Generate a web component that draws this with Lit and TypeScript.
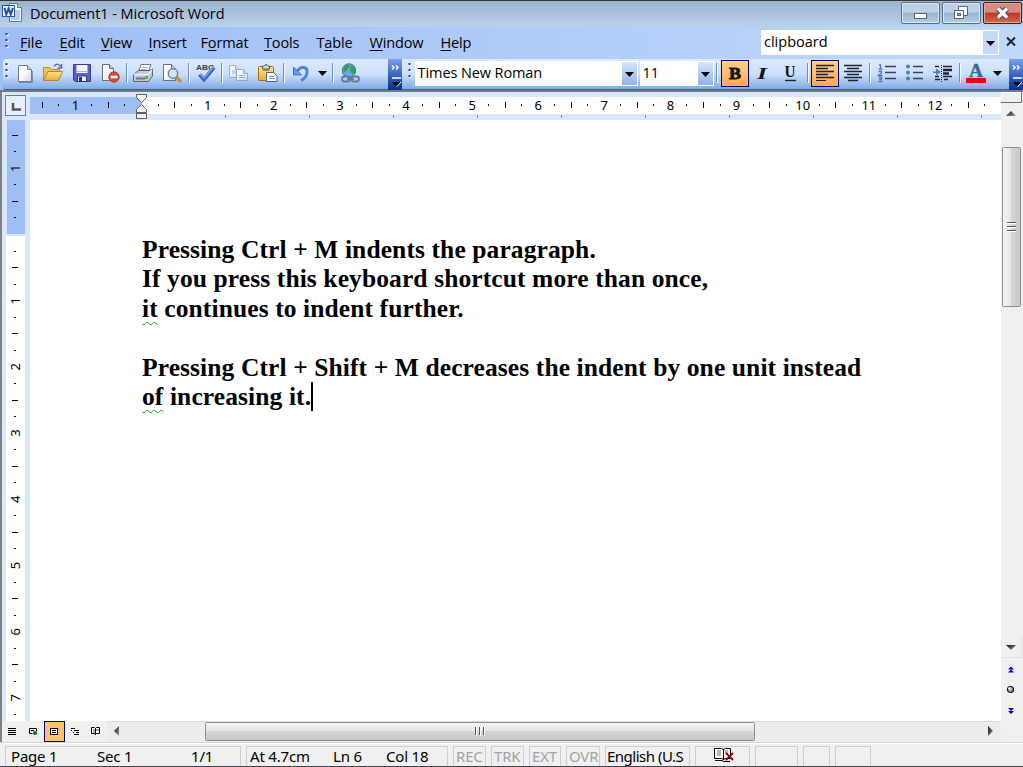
import { LitElement, html, svg, css } from "lit";
import { customElement } from "lit/decorators.js";
import { classMap } from "lit/directives/class-map.js";

const sheet = (x: number, y: number, w: number, h: number, line = "#5f6f86") => svg`
  <path d="M${x} ${y}h${w - 4}l4 4v${h - 4}h${-w}z" fill="url(#paper)" stroke=${line} />
  <path d="M${x + w - 4} ${y}v4h4" fill="#c7d3e6" stroke=${line} />`;

const ICONS: Record<string, unknown> = {
  new: svg`${sheet(-6.5, -7.5, 13, 16, "#6d7d96")}<path d="M-6 9.500H7.500V-2" fill="none" stroke="#53627b" opacity=".6"/>`,
  open: svg`<path d="M-9.500 7V-5.500h6l2 2h8V0" fill="#f1c452" stroke="#c08d2a"/>
    <path d="M-9.500 7.500L-5 -1.500H9.500L5.500 7.500z" fill="url(#gold)" stroke="#b5852a"/>
    <path d="M1 -6.500C3 -10 7 -9 8 -5.500M8.500 -9V-5H4.500" fill="none" stroke="#5873a3" stroke-width="1.500"/>`,
  save: svg`<path d="M-8.500 -8.500H8.500V8.500H-7L-8.500 7z" fill="#5a61c9" stroke="#3b3f94"/>
    <rect x="-5.500" y="-8" width="11" height="8" fill="#f4f6ff"/><path d="M-5 -1.500h10" stroke="#aab4e5"/>
    <rect x="-4.500" y="3" width="9" height="5.500" fill="#ececf6" stroke="#343884"/><rect x="-3" y="4" width="3" height="4" fill="#31357b"/>`,
  perm: svg`${sheet(-7.500, -8.500, 11, 16)}<circle cx="4" cy="4" r="5.200" fill="#dc4a2b" stroke="#b8402b"/>
    <rect x="0.500" y="2.700" width="7" height="2.600" fill="#fff"/>`,
  print: svg`<path d="M-4.500 -1L-2 -8.500H8L5 -1z" fill="#fff" stroke="#6b7890"/>
    <path d="M-1.500 -5.500h6M-2.500 -3.500h6" stroke="#a4b0c6"/>
    <path d="M-9.500 2L-5 -2.500H7L9.500 -4V3L5.500 8.500H-9.500z" fill="#c2c8d4" stroke="#5d6678"/>
    <path d="M-9 1.500H5L9 -3" fill="none" stroke="#eef1f6" stroke-width="1.500"/>
    <path d="M-7 5.500h9" stroke="#6d778a" stroke-width="2"/><rect x="2" y="3" width="3" height="3" fill="#25d820"/>`,
  preview: svg`${sheet(-8.500, -8.500, 12, 16)}<path d="M4 4L8 8" stroke="#d28c2c" stroke-width="3.200" stroke-linecap="round"/>
    <circle cx="1" cy="0.500" r="4.700" fill="#cfe6fb" stroke="#7486a3" stroke-width="1.500"/>`,
  spell: svg`<text x="-10" y="-3.500" textLength="18" lengthAdjust="spacingAndGlyphs" class="abc">ABC</text>
    <path d="M-6.500 1.500L-2 6.500L8 -5.500" fill="none" stroke="#3b66bd" stroke-width="3.800"/>
    <path d="M-6 1L-2 5L7.500 -6" fill="none" stroke="#7fa4e6" stroke-width="1.300"/>`,
  copy: svg`<g opacity=".75">${sheet(-9.500, -7.500, 10, 12, "#8b9cc0")}${sheet(-2.500, -3.500, 11, 11, "#8b9cc0")}
    <path d="M-7 -2h4M-7 0h4M0 2.500h6M0 4.500h6" stroke="#90a3ca"/></g>`,
  paste: svg`<rect x="-9.500" y="-6.500" width="15" height="14" rx="1" fill="url(#gold)" stroke="#9a6d18"/>
    <path d="M-5.500 -4V-7h2l1.500-2 1.500 2h2v3z" fill="#d8dce4" stroke="#5c5c5c"/>
    <rect x="-5" y="-3.500" width="6" height="1" fill="#76551a"/>
    <path d="M-1.500 -.500h7l3.500 3.500v5.500h-10.500z" fill="#f7faff" stroke="#4d638b"/><path d="M1 3.500h5M1 5.500h6" stroke="#7d92b8"/>`,
  undo: svg`<path d="M-4 -1.500C0 -8 7 -6 6 0C5.500 3 3 6 0 7.500" fill="none" stroke="#5383d8" stroke-width="3"/>
    <path d="M-7.500 -6V2H0.500z" fill="#6a98e6" stroke="#4374c9"/>`,
  arrow: svg`<path d="M-4 -2h9L.500 3z" fill="#000"/>`,
  link: svg`<circle cx="-1" cy="-2.500" r="6.700" fill="#6aa4ea" stroke="#4b6b9c"/>
    <path d="M-6 -6C-3 -9-1 -8 0 -7L-2 -4-5 -1-7 -2zM1 -8L5 -5 5 0 2 1 0 -3z" fill="#35a345"/>
    <g fill="none" stroke="#687892" stroke-width="1.800"><rect x="-8" y="3.500" width="8" height="5" rx="2.500"/><rect x="1" y="3.500" width="8" height="5" rx="2.500"/><path d="M-3 6h7"/></g>`,
  bold: svg`<text x="-6" y="5.500" textLength="12" lengthAdjust="spacingAndGlyphs" class="fmt b">B</text>`,
  italic: svg`<text x="-5" y="5.500" textLength="10" lengthAdjust="spacingAndGlyphs" class="fmt i">I</text>`,
  under: svg`<text x="-5.500" y="4" textLength="11" lengthAdjust="spacingAndGlyphs" class="fmt u">U</text><path d="M-5 7.500h11" stroke="#1d2430" stroke-width="1.400"/>`,
  left: svg`<path d="M-9 -7.500H9M-9 -4.500H3M-9 -1.500H9M-9 1.500H3M-9 4.500H9" stroke="#1d2430" stroke-width="1.500"/><path d="M-9 7.500H1" stroke="#1d2430"/>`,
  center: svg`<path d="M-9 -7.500H9M-6 -4.500H6M-9 -1.500H9M-6 1.500H6M-9 4.500H9M-5 7.500H5" stroke="#1d2430" stroke-width="1.500"/>`,
  number: svg`<path d="M-2 -6.500H9M-2 -.500H9M-2 5.500H9" stroke="#39435a" stroke-width="1.500"/>
    <path d="M-8 -8h1.500v4M-8.500 -3.800h4M-8.500 -1.500h3v1.500l-3 2.300h4M-8.500 4h3v4.500h-3M-8 6h2.500" fill="none" stroke="#5778b4" stroke-width="1.300"/>`,
  bullet: svg`<path d="M-2 -6.500H8M-2 -.500H8M-2 5.500H8" stroke="#39435a" stroke-width="1.500"/>
    <g fill="#5676b8"><circle cx="-7" cy="-6.500" r="2"/><circle cx="-7" cy="-.500" r="2"/><circle cx="-7" cy="5.500" r="2"/></g>`,
  indent: svg`<path d="M-8 -6.500H-4M0 -6.500H9M-8 3.500H-4M0 3.500H9M-8 6.500H-3M1 6.500H5" stroke="#1d2430" stroke-width="1.600"/><path d="M0 -3H9M0 .500H6" stroke="#1d2430" stroke-width="2.400"/>
    <path d="M-1.500 -8V9" stroke="#1d2430" stroke-dasharray="1 1"/><path d="M-10 -1.500h3v-3l5 3.500-5 3.500v-2.500h-3z" fill="#4d7cd0"/>`,
  color: svg`<text x="-7" y="4" textLength="14" lengthAdjust="spacingAndGlyphs" class="fmt a">A</text><rect x="-10" y="5" width="20" height="5" fill="#f00"/>`,
  sep: svg`<path d="M-.500 -10V9" stroke="#6a8ccb"/><path d="M.500 -9V10" stroke="#f4f9ff"/>`,
  grip: svg`<path d="M.500 -9v18" stroke="#fff" stroke-width="2" stroke-dasharray="2 4"/><path d="M-.500 -10v18" stroke="#27418a" stroke-width="2" stroke-dasharray="2 4"/>`,
};

type Cell = [icon: string, width: number, on?: boolean];
const STANDARD: Cell[] = [["grip", 8], ["new", 28], ["open", 29], ["save", 28], ["perm", 29], ["sep", 4], ["print", 29], ["preview", 28],
  ["sep", 7], ["spell", 27], ["sep", 5], ["copy", 29], ["paste", 28], ["sep", 5], ["undo", 28], ["arrow", 15], ["sep", 7], ["link", 27]];
const FORMAT: Cell[] = [["sep", 7], ["bold", 28, true], ["italic", 27], ["under", 29], ["sep", 6], ["left", 28, true], ["center", 28],
  ["sep", 6], ["number", 28], ["bullet", 28], ["indent", 29], ["sep", 5], ["color", 27], ["arrow", 15]];
const MENU: [string, string, string, number][] = [["", "F", "ile", 39.5], ["", "E", "dit", 41.5], ["", "V", "iew", 47.5], ["", "I", "nsert", 52],
  ["F", "o", "rmat", 63.5], ["", "T", "ools", 52.500], ["T", "a", "ble", 53], ["", "W", "indow", 71], ["", "H", "elp", 40]];

const cell = ([name, w, on]: Cell) => html`<svg class=${classMap({ cell: true, on: !!on })} width=${w} height="27"
  viewBox="${-Math.floor(w / 2)} -13 ${w} 27">${ICONS[name]}</svg>`;

const GRADIENTS = svg`<defs>
  <linearGradient id="paper" x1="0" y1="0" x2="1" y2="1"><stop offset=".4" stop-color="#fff"/><stop offset="1" stop-color="#c9d6ea"/></linearGradient>
  <linearGradient id="gold" x1="0" y1="0" x2="0" y2="1"><stop offset="0" stop-color="#ffe28a"/><stop offset="1" stop-color="#e9ad34"/></linearGradient>
  <linearGradient id="arr" x1="0" y1="0" x2="1" y2="1"><stop offset="0" stop-color="#111"/><stop offset="1" stop-color="#999"/></linearGradient>
  <linearGradient id="thumbh" x1="0" y1="0" x2="0" y2="1"><stop offset="0" stop-color="#f5f5f5"/><stop offset=".45" stop-color="#e6e6e6"/><stop offset=".5" stop-color="#d5d5d5"/><stop offset="1" stop-color="#c6c6c8"/></linearGradient>
  <linearGradient id="thumbv" x1="0" y1="0" x2="1" y2="0"><stop offset="0" stop-color="#f5f5f5"/><stop offset=".45" stop-color="#e6e6e6"/><stop offset=".5" stop-color="#d5d5d8"/><stop offset="1" stop-color="#c8c8cb"/></linearGradient>
</defs>`;

@customElement("app-root")
export class AppRoot extends LitElement {
  static styles = css`
    :host { display: block; width: 1023px; height: 767px; overflow: hidden; background: #fff; color: #000; font: 15px "Open Sans", "Noto Sans", sans-serif; }
    svg { display: block; flex: none; }
    .app { display: flex; flex-direction: column; height: 767px; }
    .title { box-sizing: border-box; height: 27px; border-top: 1px solid #38343a; background: linear-gradient(#9ab3d0, #bad2ea); display: flex; align-items: flex-start; }
    .title .logo { margin: 1px 6px 0 2px; }
    .title .name { flex: 1; line-height: 25px; font-size: 14.500px; letter-spacing: -0.050px; white-space: pre; }
    .wbtn { box-sizing: border-box; width: 39px; height: 22px; margin: 1px 2px 0 0; border: 1px solid #5b6f8b; border-radius: 2px; box-shadow: inset 0 0 0 1px #d9e6f4; background: linear-gradient(#bdd1e6 0 46%, #97b2d0 50%, #b4cee8); }
    .wbtn.close { margin-right: 1px; border-color: #4b1c1c; box-shadow: inset 0 0 0 1px #e0a79b; background: linear-gradient(#d98b7c 0 46%, #b93a24 50%, #cf6a4c); }
    .menu { height: 32px; display: flex; background: linear-gradient(90deg, #9ebef5, #c0d8fb); }
    .grip { width: 11px; margin-top: 3px; }
    .items { display: flex; flex: 1; padding-left: 9px; line-height: 32px; font-size: 14.500px; letter-spacing: -0.140px; }
    .items u { text-underline-offset: 2px; text-decoration-thickness: 1px; }
    .search { box-sizing: border-box; display: flex; width: 238px; height: 25px; margin-top: 3px; padding: 1px; background: #fff; }
    .search span { flex: 1; padding-left: 2px; line-height: 22px; font-size: 14.500px; }
    .search .drop { width: 15px; background: #c4dafa; }
    .bars { box-sizing: border-box; height: 33px; display: flex; background: linear-gradient(90deg, #9ebef5, #c0d8fb); border-bottom: 2px solid #77787c; }
    .bar { box-sizing: border-box; height: 31px; display: flex; padding-top: 1px; border-bottom: 1px solid #3b619c; background: linear-gradient(#dceafe, #cbdffc 50%, #82aae5); }
    .bar.std { width: 385px; margin-left: 3px; border-radius: 3px 0 0 3px; }
    .bar.fmtbar { width: 608px; padding-left: 4px; }
    .more { width: 14px; height: 31px; background: linear-gradient(#78a2ee, #3a68c0 50%, #00318c); }
    .cell.on { background: linear-gradient(#ffd190, #ffa850); outline: 1px solid #000080; outline-offset: -1px; }
    .abc { font: bold 8px "Liberation Sans", sans-serif; fill: #363c48; }
    .fmt { font: bold 18px "Liberation Serif", serif; fill: #10151d; }
    .fmt.b { stroke: #10151d; stroke-width: .8px; font-size: 17px; }
    .fmt.i { font-style: italic; font-size: 17px; }
    .fmt.u { font-size: 17px; }
    .fmt.a { font-size: 18.500px; fill: #4b6394; stroke: #4b6394; stroke-width: .4px; }
    .combo { box-sizing: border-box; display: flex; height: 25px; margin-top: 1px; padding: 1px; background: #fff; line-height: 22px; font-size: 14.500px; }
    .combo span { flex: 1; padding-left: 2px; white-space: pre; letter-spacing: -0.1px; }
    .combo .drop { width: 15px; background: linear-gradient(#d7e6fb, #8fb2ec); }
    .font { width: 223px; margin-right: 2px; }
    .size { width: 74px; }
    .work { display: flex; height: 629px; box-sizing: border-box; border-left: 2px solid #808080; }
    .pane { width: 999px; display: flex; flex-direction: column; }
    .num { font: 13px "Noto Sans", "Open Sans", sans-serif; text-anchor: middle; }
    .view { display: flex; height: 601px; }
    .page { box-sizing: border-box; width: 971px; padding: 115px 0 0 112px; background: #fff; font: bold 25.500px/29.400px "Liberation Serif", serif; letter-spacing: 0.105px; }
    .line { height: 29.400px; display: flex; white-space: pre; }
    .wavy { text-decoration: underline wavy #1c9a1c 1px; text-decoration-skip-ink: none; text-underline-offset: 4px; }
    .caret { width: 2px; height: 29px; background: #000; }
    .vs { width: 22px; background: #f0f0f0; }
    .low { display: flex; height: 22px; background: #f0f0f0; border-bottom: 1px solid #d9d9d9; box-sizing: border-box; }
    .status { box-sizing: border-box; height: 24px; padding: 2px 0 0 5px; display: flex; gap: 5px; background: #f0f0f0; border-top: 1px solid #fff; border-bottom: 1px solid #40424e; }
    .cellbox { box-sizing: border-box; display: flex; height: 20px; border: 1px solid #cfcfcf; border-bottom: 0; white-space: pre; font: 15px/18px "Noto Sans", "Open Sans", sans-serif; letter-spacing: -0.2px; padding-left: 3px; }
    .off { color: #a3a3a3; padding-left: 2px; }
    .first { padding-left: 5px; }
    .tight { letter-spacing: -0.5px; padding-left: 1px; }
  `;

  private hRuler() {
    const marks = [];
    for (let i = -6; i <= 51; i++) {
      const x = 139.5 + i * 16.53;
      if (i === 0) continue;
      if (i % 4 === 0) marks.push(svg`<text class="num" x=${x} y="18">${Math.abs(i / 4)}</text>`);
      else if (i % 2 === 0) marks.push(svg`<rect x=${Math.round(x - 0.5)} y="10" width="1" height="6"/>`);
      else marks.push(svg`<rect x=${Math.round(x - 0.5)} y="12" width="1" height="2"/>`);
    }
    const tabs = [];
    for (let x = 223; x < 999; x += 84) tabs.push(svg`<rect x=${x} y="23" width="1" height="3" fill="#808a9a"/>`);
    return html`<svg width="999" height="28" viewBox="0 0 999 28">
      <rect width="999" height="28" fill="#d8e7fc"/>
      <rect x="28" y="5" width="112" height="17" fill="#9ebef5"/><rect x="140" y="5" width="859" height="17" fill="#fff"/>
      <rect x="3.500" y="3.500" width="20" height="20" fill="#e5effd" stroke="#5681c9"/>
      <path d="M11 11v6.500h8" fill="none" stroke="#555" stroke-width="2.500"/>
      ${marks}${tabs}
      <g fill="#f4f4f4" stroke="#606060"><path d="M134.500 2.500h10v3l-5 5-5-5z"/><path d="M134.500 20.500v-3l5-5 5 5v3z"/><rect x="134.500" y="21.500" width="10" height="5"/></g>
    </svg>`;
  }

  private vRuler() {
    const marks = [];
    for (let i = -6; i <= 29; i++) {
      const y = 115 + i * 16.55;
      if (i === 0) continue;
      if (i % 4 === 0) marks.push(svg`<text class="num" transform="translate(18 ${y - 0.5}) rotate(-90)">${Math.abs(i / 4)}</text>`);
      else if (i % 2 === 0) marks.push(svg`<rect x="10" y=${Math.round(y - 1)} width="6" height="1"/>`);
      else marks.push(svg`<rect x="12" y=${Math.round(y - 1)} width="2" height="1"/>`);
    }
    return html`<svg width="28" height="601" viewBox="0 0 28 601"><rect width="28" height="601" fill="#d8e7fc"/>
      <rect x="5" y="0" width="18" height="114" fill="#9ebef5"/><rect x="4" y="116" width="19" height="485" fill="#fff"/>${marks}</svg>`;
  }

  private vScroll() {
    return html`<svg width="22" height="629" viewBox="0 0 22 629"><rect width="22" height="629" fill="#f0f0f0"/>
      <path d="M0 10.500H20.500V0" fill="none" stroke="#707070"/><path d="M.500 9V.500H19" fill="none" stroke="#fff"/>
      <path d="M5 24l5-5 5 5z" fill="url(#arr)"/>
      <rect x="1.500" y="55.500" width="18" height="159" rx="1" fill="url(#thumbv)" stroke="#8e8e8e"/>
      <path d="M6 130.500h9M6 134.500h9M6 138.500h9" stroke="#555"/><path d="M6 131.500h9M6 135.500h9M6 139.500h9" stroke="#fff"/>
      <path d="M5 553h10l-5 5z" fill="url(#arr)"/><path d="M1 565.500h20V545" fill="none" stroke="#e0e0e0"/>
      <g fill="#00f"><path d="M7 577.500l3-3 3 3zM7 580.500l3-3 3 3z"/><path d="M7 616h6l-3 3zM7 619h6l-3 3z"/></g>
      <circle cx="9.500" cy="597.500" r="3" fill="#aaa" stroke="#111" stroke-width="1.200"/><circle cx="8.500" cy="596.500" r="1.200" fill="#fff"/>
    </svg>`;
  }

  private hScroll() {
    return html`<svg width="1023" height="21" viewBox="0 0 1023 21"><rect width="1023" height="21" fill="#f0f0f0"/>
      <rect width="2" height="21" fill="#808080"/>
      <path d="M8 7.500h8M8 9.500h8M8 11.500h8M8 13.500h8" stroke="#000"/>
      <path d="M29.500 7.500h7v3M29.500 7.500v5h3" fill="none" stroke="#000"/><circle cx="35" cy="12" r="2" fill="#176b22"/>
      <path d="M31 9.500h3" stroke="#000"/>
      <rect x="44.500" y=".500" width="20" height="20" fill="#ffc06f" stroke="#000080"/>
      <rect x="50.500" y="7.500" width="7" height="6" fill="#fff" stroke="#000"/><path d="M52 9.500h4M52 11.500h4" stroke="#000"/>
      <path d="M71 7.500h4M74 9.500h5M76 11.500h3M74 13.500h5" stroke="#000"/><path d="M71 9.500h1M73 11.500h1" stroke="#000"/>
      <path d="M91.500 6.500h3l1 1 1-1h3v6h-3l-1 1-1-1h-3zM95.500 7v7" fill="#fff" stroke="#000"/><path d="M93 9h2M96 9h3M93 11h2" stroke="#555"/>
      <rect x="107" width="894" height="21" fill="#ececec"/><path d="M107 .500H1001" stroke="#ddd"/>
      <path d="M119 5v10l-5-5z" fill="url(#arr)"/><path d="M988 5v10l5-5z" fill="url(#arr)"/>
      <rect x="205.500" y="1.500" width="549" height="18" rx="1" fill="url(#thumbh)" stroke="#8e8e8e"/>
      <path d="M475.500 6v8M479.500 6v8M483.500 6v8" stroke="#555"/><path d="M476.500 6v9M480.500 6v9M484.500 6v9" stroke="#fff"/>
    </svg>`;
  }

  render() {
    const drop = html`<svg class="drop" width="15" height="23" viewBox="0 0 15 23"><path d="M3 10h9l-4.500 5z"/></svg>`;
    const more = html`<svg class="more" width="14" height="31" viewBox="0 0 14 31">
      <path d="M4 6.500l2 2-2 2M8 6.500l2 2-2 2" fill="none" stroke="#fff" stroke-width="1.500"/><path d="M4 19h9" stroke="#fff" stroke-width="1.500"/>
      <path d="M4 23h9l-4.500 5z" fill="#000"/><path d="M13 23l-4.500 5" stroke="#fff"/></svg>`;
    const grip = html`<svg class="grip" width="11" height="27" viewBox="-7 -13 11 27">${ICONS.grip}</svg>`;
    const word = (t: string, w: number) => html`<span style="width:${w}px">${t}</span>`;
    const box = (w: number, content: unknown, kind = "") => html`<div class="cellbox ${kind}" style="width:${w}px">${content}</div>`;
    return html`<div class="app">
      <div class="title">
        <svg class="logo" width="22" height="22" viewBox="0 0 22 22">${GRADIENTS}
          <path d="M7.500 1.500h8l4 4v14h-12z" fill="#eef5ff" stroke="#5878a8"/><path d="M15.500 1.500v4h4" fill="#bcd0ee" stroke="#5878a8"/>
          <path d="M12 9h6M12 11h6M12 13h6M9 15h9M9 17h9" stroke="#7fa3d9"/>
          <rect x=".500" y="3.500" width="12" height="11" fill="#f2f6ff" stroke="#2c55a8"/>
          <path d="M2.500 6l1.800 6.500 2.400-6 2 6 2.200-6.500" fill="none" stroke="#234fa8" stroke-width="2"/></svg>
        <span class="name">Document1 - Microsoft Word</span>
        <svg class="wbtn" viewBox="1 1 37 20"><rect x="13.500" y="11.500" width="12" height="5" fill="#fff" stroke="#59677c"/></svg>
        <svg class="wbtn" viewBox="1 1 37 20"><path d="M16.500 4.500h9v9h-9z" fill="#f5f8fc" stroke="#59677c"/><rect x="12.500" y="8.500" width="9" height="8" fill="#f5f8fc" stroke="#59677c"/><rect x="15.500" y="11.500" width="3" height="2" fill="#8faac8" stroke="#59677c"/></svg>
        <svg class="wbtn close" viewBox="1 1 37 20"><path d="M15 6.500l9 9M24 6.500l-9 9" stroke="#554c57" stroke-width="5.500"/><path d="M15 6.500l9 9M24 6.500l-9 9" stroke="#fff" stroke-width="3.200"/></svg>
      </div>
      <div class="menu">${grip}
        <div class="items">${MENU.map(([a, k, b, w]) => html`<span style="width:${w}px">${a}<u>${k}</u>${b}</span>`)}</div>
        <div class="search"><span>clipboard</span>${drop}</div>
        <svg width="24" height="32" viewBox="0 0 24 32"><path d="M8 10.500l8 8M16 10.500l-8 8" stroke="#20242c" stroke-width="2"/></svg>
      </div>
      <div class="bars">
        <div class="bar std">${STANDARD.map(cell)}</div>${more}
        <div class="bar fmtbar">${cell(["grip", 9])}
          <div class="combo font"><span>Times New Roman</span>${drop}</div>
          <div class="combo size"><span>11</span>${drop}</div>
          ${FORMAT.map(cell)}
        </div>${more}
      </div>
      <div class="work">
        <div class="pane">${this.hRuler()}
          <div class="view">${this.vRuler()}
            <div class="page">
              <div class="line">Pressing Ctrl + M indents the paragraph.</div>
              <div class="line">If you press this keyboard shortcut more than once,</div>
              <div class="line"><span class="wavy">it</span> continues to indent further.</div>
              <div class="line"></div>
              <div class="line">Pressing Ctrl + Shift + M decreases the indent by one unit instead</div>
              <div class="line"><span class="wavy">of</span> increasing it.<span class="caret"></span></div>
            </div>
          </div>
        </div>
        <div class="vs">${this.vScroll()}</div>
      </div>
      <div class="low">${this.hScroll()}</div>
      <div class="status">
        ${box(236, html`${word("Page 1", 86)}${word("Sec 1", 94)}${word("1/1", 30)}`, "first")}
        ${box(202, html`${word("At 4.7cm", 83)}${word("Ln 6", 53)}${word("Col 18", 50)}`)}
        ${box(33, "REC", "off")}${box(33, "TRK", "off")}${box(32, "EXT", "off")}${box(34, "OVR", "off")}
        ${box(85, "English (U.S", "tight")}
        ${box(55, html`<svg width="40" height="19" viewBox="-4 1 40 19"><path d="M11.500 2.500h7l2 1 2-1h5v10h-5l-2 1-2-1h-7z" fill="#fff" stroke="#000"/><path d="M20.500 3v11M12 14.500h7l2 1h6" fill="none" stroke="#000"/><path d="M14 5h4M14 7h4M14 9h4M22 5h3M22 7h3" stroke="#777"/><path d="M23 7l7 7M30 7l-7 7" stroke="#8b0000" stroke-width="1.800"/></svg>`)}
        ${box(43, "")}${box(27, "")}${box(36, "")}
      </div>
    </div>`;
  }
}
